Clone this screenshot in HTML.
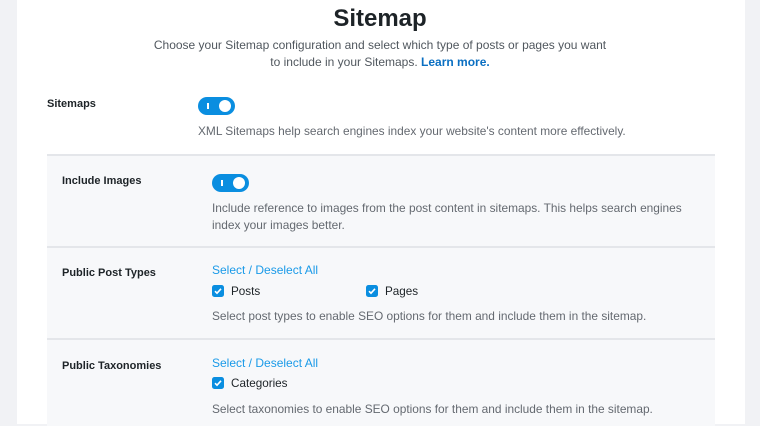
<!DOCTYPE html><html><head><style>
body{margin:0;width:760px;height:424px;background:#f1f2f5;font-family:"Liberation Sans",sans-serif;overflow:hidden;position:relative}
.card{position:absolute;left:17px;top:0;width:728px;height:424px;background:#fff}
h1{position:absolute;left:0;width:760px;top:5px;margin:0;text-align:center;font-size:24px;font-weight:bold;color:#1d2327}
.intro{position:absolute;left:0;width:760px;top:37px;text-align:center;font-size:12px;line-height:17px;color:#50575e}
.intro a{color:#0a6fc2;font-weight:bold;text-decoration:none}
.lbl{position:absolute;font-size:11px;font-weight:bold;color:#1d2327}
.desc{position:absolute;font-size:11.9px;line-height:17px;color:#646970}
.tog{position:absolute;width:37px;height:18px;border-radius:9px;background:#0a8ee0}
.tog:before{content:"";position:absolute;left:9px;top:6px;width:1.5px;height:6px;background:#fff}
.tog:after{content:"";position:absolute;right:4px;top:3px;width:12px;height:12px;border-radius:50%;background:#fff}
.sec{position:absolute;left:47px;width:668px;background:#f7f8fa;border-top:2px solid #e4e6ea}
.link{position:absolute;font-size:12px;color:#1a9ae8}
.cb{position:absolute;width:12px;height:12px;border-radius:2.5px;background:#0a8ee0}
.cb svg{position:absolute;left:0;top:0}
.cl{position:absolute;font-size:11.7px;color:#1d2327}
</style></head><body>
<div class="card"></div>
<h1>Sitemap</h1>
<div class="intro">Choose your Sitemap configuration and select which type of posts or pages you want<br>to include in your Sitemaps. <a>Learn more.</a></div>
<div class="lbl" style="left:47px;top:98px">Sitemaps</div>
<div class="tog" style="left:198px;top:97px"></div>
<div class="desc" style="left:198px;top:123px">XML Sitemaps help search engines index your website's content more effectively.</div>
<div class="sec" style="top:154px;height:92px"></div>
<div class="sec" style="top:246px;height:92px"></div>
<div class="sec" style="top:338px;height:86px"></div>
<div class="lbl" style="left:62px;top:175px">Include Images</div>
<div class="tog" style="left:212px;top:174px"></div>
<div class="desc" style="left:212px;top:200px">Include reference to images from the post content in sitemaps. This helps search engines<br>index your images better.</div>
<div class="lbl" style="left:62px;top:267px">Public Post Types</div>
<div class="link" style="left:212px;top:263px">Select / Deselect All</div>
<div class="cb" style="left:212px;top:285px"><svg width="12" height="12"><path d="M3 6.2l2 2 4-4.4" stroke="#fff" stroke-width="1.6" fill="none"/></svg></div>
<div class="cl" style="left:231px;top:285px">Posts</div>
<div class="cb" style="left:366px;top:285px"><svg width="12" height="12"><path d="M3 6.2l2 2 4-4.4" stroke="#fff" stroke-width="1.6" fill="none"/></svg></div>
<div class="cl" style="left:385px;top:285px">Pages</div>
<div class="desc" style="left:212px;top:308px">Select post types to enable SEO options for them and include them in the sitemap.</div>
<div class="lbl" style="left:62px;top:360px">Public Taxonomies</div>
<div class="link" style="left:212px;top:356px">Select / Deselect All</div>
<div class="cb" style="left:212px;top:377px"><svg width="12" height="12"><path d="M3 6.2l2 2 4-4.4" stroke="#fff" stroke-width="1.6" fill="none"/></svg></div>
<div class="cl" style="left:231px;top:377px">Categories</div>
<div class="desc" style="left:212px;top:401px">Select taxonomies to enable SEO options for them and include them in the sitemap.</div>
</body></html>
